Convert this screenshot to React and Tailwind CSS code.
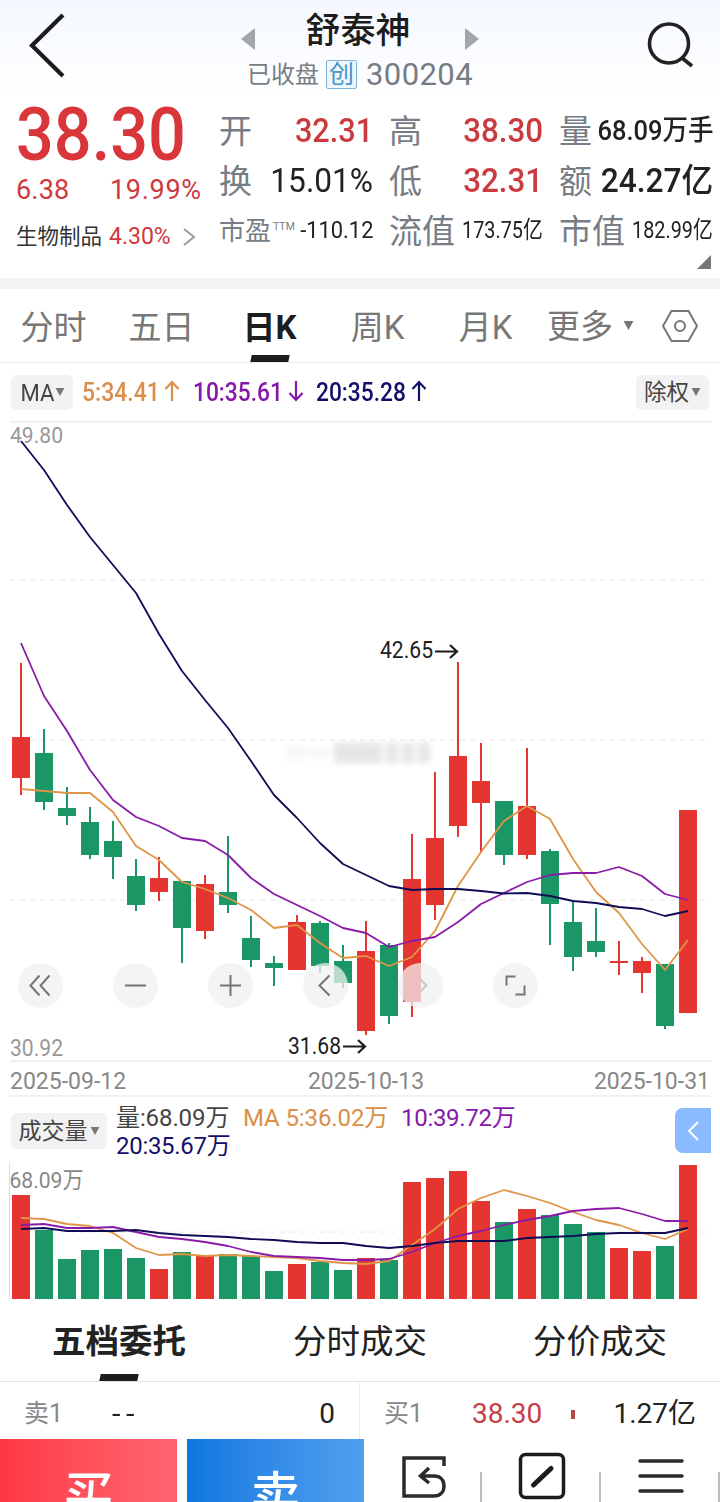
import { useState } from 'react';

const RED = '#e53531';
const GREEN = '#1b9765';

// [high, top, bottom, low, up]
const candles = [
  [663, 737, 778, 795, 1], [729, 753, 802, 810, 0], [787, 808, 816, 825, 0], [807, 822, 855, 859, 0],
  [821, 841, 857, 879, 0], [859, 876, 905, 911, 0], [857, 878, 892, 901, 1], [881, 881, 928, 963, 0],
  [875, 884, 931, 939, 1], [836, 892, 905, 913, 0], [916, 938, 960, 967, 0], [956, 963, 968, 986, 0],
  [915, 922, 970, 970, 1], [921, 923, 966, 973, 0], [945, 961, 983, 988, 0], [921, 951, 1031, 1035, 1],
  [943, 945, 1016, 1024, 0], [834, 879, 1002, 1017, 1], [772, 838, 905, 920, 1], [662, 756, 826, 837, 1],
  [743, 781, 803, 853, 1], [801, 801, 855, 865, 0], [748, 806, 855, 859, 1], [849, 851, 904, 945, 0],
  [900, 922, 957, 971, 0], [908, 941, 952, 957, 0], [941, 961, 963, 975, 1], [957, 961, 973, 993, 1],
  [964, 964, 1026, 1029, 0], [810, 810, 1013, 1013, 1],
];

const ma5 = [789, 791, 793, 793, 812, 846, 860, 882, 889, 898, 910, 928, 925, 943, 958, 956, 966, 957, 931, 886, 852, 821, 806, 819, 859, 892, 913, 944, 970, 940];
const ma10 = [643, 696, 731, 770, 800, 817, 826, 838, 841, 855, 878, 894, 905, 916, 928, 933, 947, 941, 937, 922, 904, 893, 882, 875, 873, 873, 867, 876, 894, 900];
const ma20 = [441, 470, 505, 537, 565, 593, 634, 671, 700, 728, 761, 795, 818, 843, 864, 875, 886, 890, 889, 889, 891, 893.5, 893, 896, 901, 903, 907, 909, 916, 911];

const volumes = [1195, 1230, 1259, 1250, 1249, 1258, 1269, 1252, 1256, 1254, 1256, 1271, 1264, 1262, 1270, 1258, 1260, 1182, 1178, 1171, 1201, 1222, 1209, 1215, 1224, 1232, 1248, 1251, 1246, 1165];
const vol5 = [1218, 1219, 1224, 1226, 1233, 1248, 1255, 1254, 1256, 1255, 1256, 1257, 1258, 1261, 1263, 1264, 1261, 1245, 1229, 1209, 1198, 1190, 1196, 1203, 1212, 1220, 1225, 1233, 1239, 1229];
const vol10 = [1225, 1224, 1228, 1228, 1227, 1232, 1237, 1239, 1242, 1246, 1252, 1256, 1257, 1258, 1260, 1260, 1259, 1252, 1243, 1236, 1231, 1225, 1220, 1216, 1211, 1209, 1208, 1214, 1221, 1221];
const vol20 = [1229, 1228, 1231, 1231, 1231, 1230, 1233, 1235, 1236, 1237, 1239, 1240, 1242, 1243, 1243, 1246, 1248, 1246, 1243, 1241, 1241, 1241, 1238, 1237, 1236, 1234, 1233, 1233, 1233, 1228];

const xAt = (i) => 21 + i * 23;
const toPoints = (values) => values.map((y, i) => `${xAt(i)},${y}`).join(' ');

const Line = ({ values, color }) => (
  <polyline points={toPoints(values)} fill="none" stroke={color} strokeWidth="1.8" strokeLinejoin="round" />
);

const Caret = ({ className }) => (
  <svg viewBox="0 0 10 9" className={className} fill="currentColor"><path d="M0 0h10L5 9z" /></svg>
);

const Arrow = ({ down }) => (
  <svg viewBox="0 0 16 24" className={`-mt-1 h-6 w-4 ${down ? 'rotate-180' : ''}`} fill="none" stroke="currentColor" strokeWidth="2.2">
    <path d="M8 22V3M1.5 10L8 3l6.5 7" />
  </svg>
);

const Header = () => (
  <header className="flex h-[98px] justify-between bg-linear-to-b from-[#f4f8fe] to-white">
    <svg viewBox="0 0 90 98" className="h-[98px] w-[90px]" fill="none" stroke="#1c1c1e" strokeWidth="4.2">
      <path d="M63 15L32 45.500L63 76" />
    </svg>
    <div className="flex w-[238px] flex-col items-center">
      <div className="flex h-[58px] w-full items-center justify-between pt-1.5">
        <svg viewBox="0 0 14 22" className="mt-3.5 h-[22px] w-[14px]" fill="#a3a7ad"><path d="M14 0v22L0 11z" /></svg>
        <h1 className="-ml-1 text-[35px] leading-[54px] font-medium text-[#1c1c1e]">舒泰神</h1>
        <svg viewBox="0 0 14 22" className="mt-3.5 h-[22px] w-[14px]" fill="#a3a7ad"><path d="M0 0v22l14-11z" /></svg>
      </div>
      <div className="flex h-8 items-center whitespace-nowrap text-[#777c83]">
        <span className="pt-px text-[24px]">已收盘</span>
        <span className="ml-[7px] flex h-[29px] w-[31px] items-center justify-center rounded-xs border-[1.5px] border-[#7fb3d8] bg-[#edf7fd] text-[25px] leading-none text-[#4a93c4]">创</span>
        <span className="ml-[9px] pt-0.5 text-[31px] tracking-[0.4px]">300204</span>
      </div>
    </div>
    <svg viewBox="0 0 90 98" className="h-[98px] w-[90px]" fill="none" stroke="#222" strokeWidth="3.600">
      <circle cx="39" cy="43.500" r="19.500" /><path d="M52 58l10 8" />
    </svg>
  </header>
);

const Stat = ({ label, small, children }) => (
  <div className="flex h-[50px] w-[154px] items-center justify-between whitespace-nowrap">
    <span className={`text-[#777d85] ${small ? 'pt-px text-[26px]' : 'pt-0.5 text-[33px]'}`}>{label}</span>
    {children}
  </div>
);

const Quote = () => (
  <section className="flex h-[180px] leading-none">
    <div className="w-[219px] pl-4 text-[#d0383c]">
      <div className="flex h-[73px] items-center">
        <span className="origin-left scale-x-[.9] text-[74px] font-medium text-[#d9363a]">38.30</span>
      </div>
      <div className="flex h-9 items-center pt-[3px] text-[27px]">
        <span className="w-[94px] tracking-[0.2px]">6.38</span>
        <span className="tracking-[0.7px]">19.99%</span>
      </div>
      <div className="flex h-14 items-center pt-[3px]">
        <span className="w-[93px] text-[21.5px] text-[#333]">生物制品</span>
        <span className="text-[23px]">4.30%</span>
        <svg viewBox="0 0 12 18" className="ml-3 h-[18px] w-3" fill="none" stroke="#9a9a9a" strokeWidth="2"><path d="M1 1l10 8-10 8" /></svg>
      </div>
    </div>
    <div className="relative grid h-[150px] grid-cols-3 gap-x-4 pt-[7px] text-[#222]">
      <Stat label="开"><span className="origin-right scale-x-[.93] text-[33px] font-medium text-[#c93b3f]">32.31</span></Stat>
      <Stat label="高"><span className="origin-right scale-x-[.95] text-[33px] font-medium text-[#c93b3f]">38.30</span></Stat>
      <Stat label="量"><span className="-ml-8 origin-right scale-x-[.91] pt-0.5 text-[28px] font-medium">68.09万手</span></Stat>
      <Stat label="换"><span className="origin-right scale-x-[.96] text-[33px]">15.01%</span></Stat>
      <Stat label="低"><span className="origin-right scale-x-[.95] text-[33px] font-medium text-[#c93b3f]">32.31</span></Stat>
      <Stat label="额"><span className="-ml-8 origin-right scale-x-[.96] text-[33px] font-medium">24.27亿</span></Stat>
      <Stat small label={<>市盈<sup className="-top-[10px] ml-0.5 text-[10.5px]">TTM</sup></>}>
        <span className="-ml-8 origin-right scale-x-[.91] text-[24px]">-110.12</span>
      </Stat>
      <Stat label="流值"><span className="-ml-8 origin-right scale-x-[.825] text-[24px]">173.75亿</span></Stat>
      <Stat label="市值"><span className="-ml-8 origin-right scale-x-[.825] text-[24px]">182.99亿</span></Stat>
      <svg viewBox="0 0 14 14" className="absolute right-0.5 -bottom-[21px] size-[14px]" fill="#777"><path d="M14 0v14H0z" /></svg>
    </div>
  </section>
);

const PeriodTabs = ({ active, onChange }) => (
  <nav className="flex h-[74px] border-b border-[#ececec] text-[33px] text-[#777]">
    {['分时', '五日', '日K', '周K', '月K'].map((tab) => (
      <button
        key={tab}
        onClick={() => onChange(tab)}
        className={`flex w-[108px] flex-col items-center justify-between pr-px ${tab === active ? 'font-bold text-[#1d1d1f]' : ''}`}
      >
        <span className="h-[60px] leading-[78px]">{tab}</span>
        {tab === active && <span className="h-[7px] w-[38px] -skew-x-12 bg-[#1d1d1f]" />}
      </button>
    ))}
    <button className="ml-[7px] flex items-center pt-[3px] text-[33px]">
      更多<Caret className="mb-1 ml-2.5 h-[9px] w-[11px]" />
    </button>
    <svg viewBox="0 0 36 34" className="mt-[20px] ml-[28px] h-[34px] w-9" fill="none" stroke="#777" strokeWidth="2">
      <path d="M9.500 2h17L35 17l-8.500 15h-17L1 17z" /><circle cx="18" cy="17" r="5" />
    </svg>
  </nav>
);

const MaLegend = () => (
  <div className="mx-[11px] flex h-[58px] items-center text-[25px]">
    <button className="flex h-[35px] w-[62px] items-center justify-center rounded-md bg-[#f2f2f2] pt-0.5 text-[24px] text-[#444]">
      <span className="-mr-px scale-x-[.92]">MA</span><Caret className="mb-0.5 h-2 w-2.5 text-[#777]" />
    </button>
    <div className="ml-[9px] flex w-[111px] items-center pt-0.5 text-[#d98f49]">
      <span className="-mr-[3px] origin-left scale-x-[.92] font-medium">5:34.41</span><Arrow />
    </div>
    <div className="flex w-[123px] items-center pt-0.5 text-[#8518aa]">
      <span className="-mr-1 origin-left scale-x-[.91] font-medium">10:35.61</span><Arrow down />
    </div>
    <div className="flex items-center pt-0.5 text-[#13106a]">
      <span className="-mr-1 origin-left scale-x-[.91] font-medium">20:35.28</span><Arrow />
    </div>
    <button className="ml-auto flex h-[35px] w-[73px] items-center justify-center rounded-md bg-[#f2f2f2] pt-0.5 text-[22.5px] text-[#444]">
      除权<Caret className="mb-0.5 ml-0.5 h-2 w-2.5 text-[#777]" />
    </button>
  </div>
);

const controls = [
  { x: 40.500, d: 'M-1 -10l-9 10 9 10M9 -10l-9 10 9 10' },
  { x: 135.500, d: 'M-10.500 0h21' },
  { x: 230.500, d: 'M-10.500 0h21M0 -10.500v21' },
  { x: 325.500, d: 'M4 -10l-10 10 10 10' },
  { x: 420.500, d: 'M0 -6l6 6-6 6', faded: true },
  { x: 515.500, d: 'M-9 0v-9h9M9 0v9h-9' },
];

const CandleChart = () => (
  <div className="relative">
    <svg viewBox="0 421 720 641" className="block h-[641px] w-full">
      <path d="M10 421.500H711M10 1061.500H711" stroke="#ececec" strokeWidth="2" />
      <path d="M10 580H711M10 740H711M10 900H711" stroke="#e8e8e8" strokeDasharray="5 5" />
      <text x="10" y="443" fontSize="22.500" fill="#999" textLength="53" lengthAdjust="spacingAndGlyphs">49.80</text>
      <text x="10" y="1056" fontSize="23" fill="#999" textLength="53" lengthAdjust="spacingAndGlyphs">30.92</text>
      {candles.map(([high, top, bottom, low, up], i) => (
        <g key={i} fill={up ? RED : GREEN}>
          <rect x={xAt(i) - 1} y={high} width="2" height={low - high} />
          <rect x={xAt(i) - 9} y={top} width="18" height={bottom - top} />
        </g>
      ))}
      <Line values={ma5} color="#e09546" />
      <Line values={ma10} color="#8a1ba8" />
      <Line values={ma20} color="#0f0c55" />
      <g fontSize="23" fill="#1d1d1f">
        <text x="380" y="658" textLength="53" lengthAdjust="spacingAndGlyphs">42.65</text>
        <text x="288" y="1054" textLength="53" lengthAdjust="spacingAndGlyphs">31.68</text>
      </g>
      <path d="M435 651.500h22M450 645l7 6.500-7 6.500M343 1046.500h22M358 1040l7 6.500-7 6.500" fill="none" stroke="#1d1d1f" strokeWidth="2.2" />
      {controls.map(({ x, d, faded }) => (
        <g key={x} transform={`translate(${x} 985.5)`}>
          <circle r="22.500" fill="#f0f0f0" fillOpacity=".75" />
          <path d={d} fill="none" stroke={faded ? '#c8c8c8' : '#757575'} strokeWidth="2" />
        </g>
      ))}
    </svg>
    <div className="absolute top-[322px] left-[286px] flex h-[20px] w-[146px] items-center gap-1 blur-[3px]">
      <span className="h-3 w-5 bg-neutral-100" />
      <span className="h-2 w-5 bg-neutral-100" />
      <span className="h-full w-12 bg-neutral-200" />
      <span className="h-full w-3 bg-neutral-200" />
      <span className="h-full w-3 bg-neutral-200" />
      <span className="h-full w-3 bg-neutral-200" />
    </div>
  </div>
);

const VolumePanel = () => (
  <section>
    <div className="mx-[10px] flex h-[35px] items-center justify-between border-b-2 border-[#f0f0f0] pt-[7px] text-[23px] text-[#888]">
      <span>2025-09-12</span>
      <span className="ml-3">2025-10-13</span>
      <span>2025-10-31</span>
    </div>
    <div className="flex h-[66px] pl-[11px]">
      <button className="mt-4 flex h-9 w-24 items-center justify-center rounded-md bg-[#f2f2f2] pt-0.5 text-[23px] text-[#444]">
        成交量<Caret className="mb-0.5 ml-0.5 h-2 w-2.5 text-[#777]" />
      </button>
      <div className="ml-[9px] w-[500px] pt-[7px] text-[24px] leading-7 tracking-[-0.1px]">
        <div className="flex h-7 whitespace-nowrap">
          <span className="w-[127px] text-[#444]">量:68.09万</span>
          <span className="w-[158px] text-[#d98f49]">MA 5:36.02万</span>
          <span className="tracking-[-0.3px] text-[#8518aa]">10:39.72万</span>
        </div>
        <div className="tracking-[-0.3px] text-[#13106a]">20:35.67万</div>
      </div>
      <button className="mt-[11px] ml-auto mr-[9px] flex h-[45px] w-9 items-center justify-center rounded-l-lg bg-[#8abaff]">
        <svg viewBox="0 0 12 20" className="h-5 w-3" fill="none" stroke="#fff" strokeWidth="2"><path d="M11 1L2 10l9 9" /></svg>
      </button>
    </div>
    <svg viewBox="0 1163 720 137" className="block h-[137px] w-full">
      <path d="M9.500 1163v136" stroke="#ddd" />
      <path d="M10 1232H711" stroke="#e8e8e8" strokeDasharray="5 5" />
      <text x="9.500" y="1188" fontSize="22.500" fill="#888" textLength="74" lengthAdjust="spacingAndGlyphs">68.09万</text>
      {volumes.map((y, i) => (
        <rect key={i} x={xAt(i) - 9} y={y} width="18" height={1299 - y} fill={candles[i][4] ? RED : GREEN} />
      ))}
      <Line values={vol5} color="#e09546" />
      <Line values={vol10} color="#8a1ba8" />
      <Line values={vol20} color="#0f0c55" />
    </svg>
  </section>
);

const OrderBook = () => (
  <section>
    <div className="grid h-[82px] grid-cols-3 grid-rows-[81px] border-b border-[#e2e2e2] text-[33.500px] text-[#222]">
      <div className="flex flex-col items-center justify-between pr-0.5 font-bold">
        <span className="h-[70px] leading-[84px]">五档委托</span>
        <span className="h-[7px] w-[38px] -skew-x-12 bg-[#1d1d1f]" />
      </div>
      <span className="text-center leading-[84px]">分时成交</span>
      <span className="text-center leading-[84px]">分价成交</span>
    </div>
    <div className="grid h-[57px] grid-cols-2 text-[28px] text-[#222]">
      <div className="flex items-center border-r border-[#eee] pt-[7px] pr-[24px] pl-6">
        <span className="w-[88px] text-[25px] text-[#888]">卖1</span>
        <span className="origin-left scale-x-110 tracking-[5px]">--</span>
        <span className="ml-auto">0</span>
      </div>
      <div className="flex items-center pt-[7px] pr-6 pl-6">
        <span className="w-[88px] text-[25px] text-[#888]">买1</span>
        <span className="text-[#c64044]">38.30</span>
        <span className="ml-[29px] h-[9px] w-1 bg-[#b5474a]" />
        <span className="ml-auto">1.27亿</span>
      </div>
    </div>
  </section>
);

const BottomBar = () => (
  <footer className="flex h-[63px] overflow-hidden text-[50px] font-medium text-white">
    <button className="h-[114px] w-[177px] bg-linear-to-r from-[#ff3744] to-[#ff6570]">买</button>
    <button className="ml-[10px] h-[114px] w-[177px] bg-linear-to-r from-[#0c78e0] to-[#509fee]">卖</button>
    <div className="grid flex-1 grid-cols-[116px_119px_1fr] text-[#2b2b2b]">
      <div className="flex justify-center pt-[15px] pl-[5px]">
        <svg viewBox="0 0 48 48" className="size-12" fill="none" stroke="currentColor" strokeWidth="3.500">
          <path d="M43 12V4H3v38h30c6 0 10-4 10-10s-4-10-10-10H20M28 14l-8.500 8 8.500 7" />
        </svg>
      </div>
      <div className="relative flex justify-center pt-[13px] pl-[5px]">
        <span className="absolute top-[33px] left-0 h-8 w-0.5 bg-[#bbb]" />
        <svg viewBox="0 0 48 48" className="size-12" fill="none" stroke="#1c1c1c" strokeWidth="3.500">
          <rect x="2.500" y="2.500" width="43" height="43" rx="5" /><path d="M15.500 33L33 16.500" strokeWidth="5" strokeLinecap="round" />
        </svg>
      </div>
      <div className="relative flex justify-center pt-[20px] pl-[3px]">
        <span className="absolute top-[33px] left-0 h-8 w-0.5 bg-[#bbb]" />
        <svg viewBox="0 0 48 36" className="h-9 w-12" fill="none" stroke="currentColor" strokeWidth="3.500" strokeLinecap="round">
          <path d="M3 2h42M3 17h42M3 32h42" />
        </svg>
        <span className="absolute top-[33px] right-0 h-8 w-0.5 bg-[#bbb]" />
      </div>
    </div>
  </footer>
);

const App = () => {
  const [period, setPeriod] = useState('日K');

  return (
    <div className="h-[1502px] w-[720px] overflow-hidden bg-white font-['Roboto','Noto_Sans_CJK_SC',sans-serif]">
      <Header />
      <Quote />
      <div className="h-[11px] bg-[#f4f4f4]" />
      <PeriodTabs active={period} onChange={setPeriod} />
      <MaLegend />
      <CandleChart />
      <VolumePanel />
      <OrderBook />
      <BottomBar />
    </div>
  );
};

export default App;
